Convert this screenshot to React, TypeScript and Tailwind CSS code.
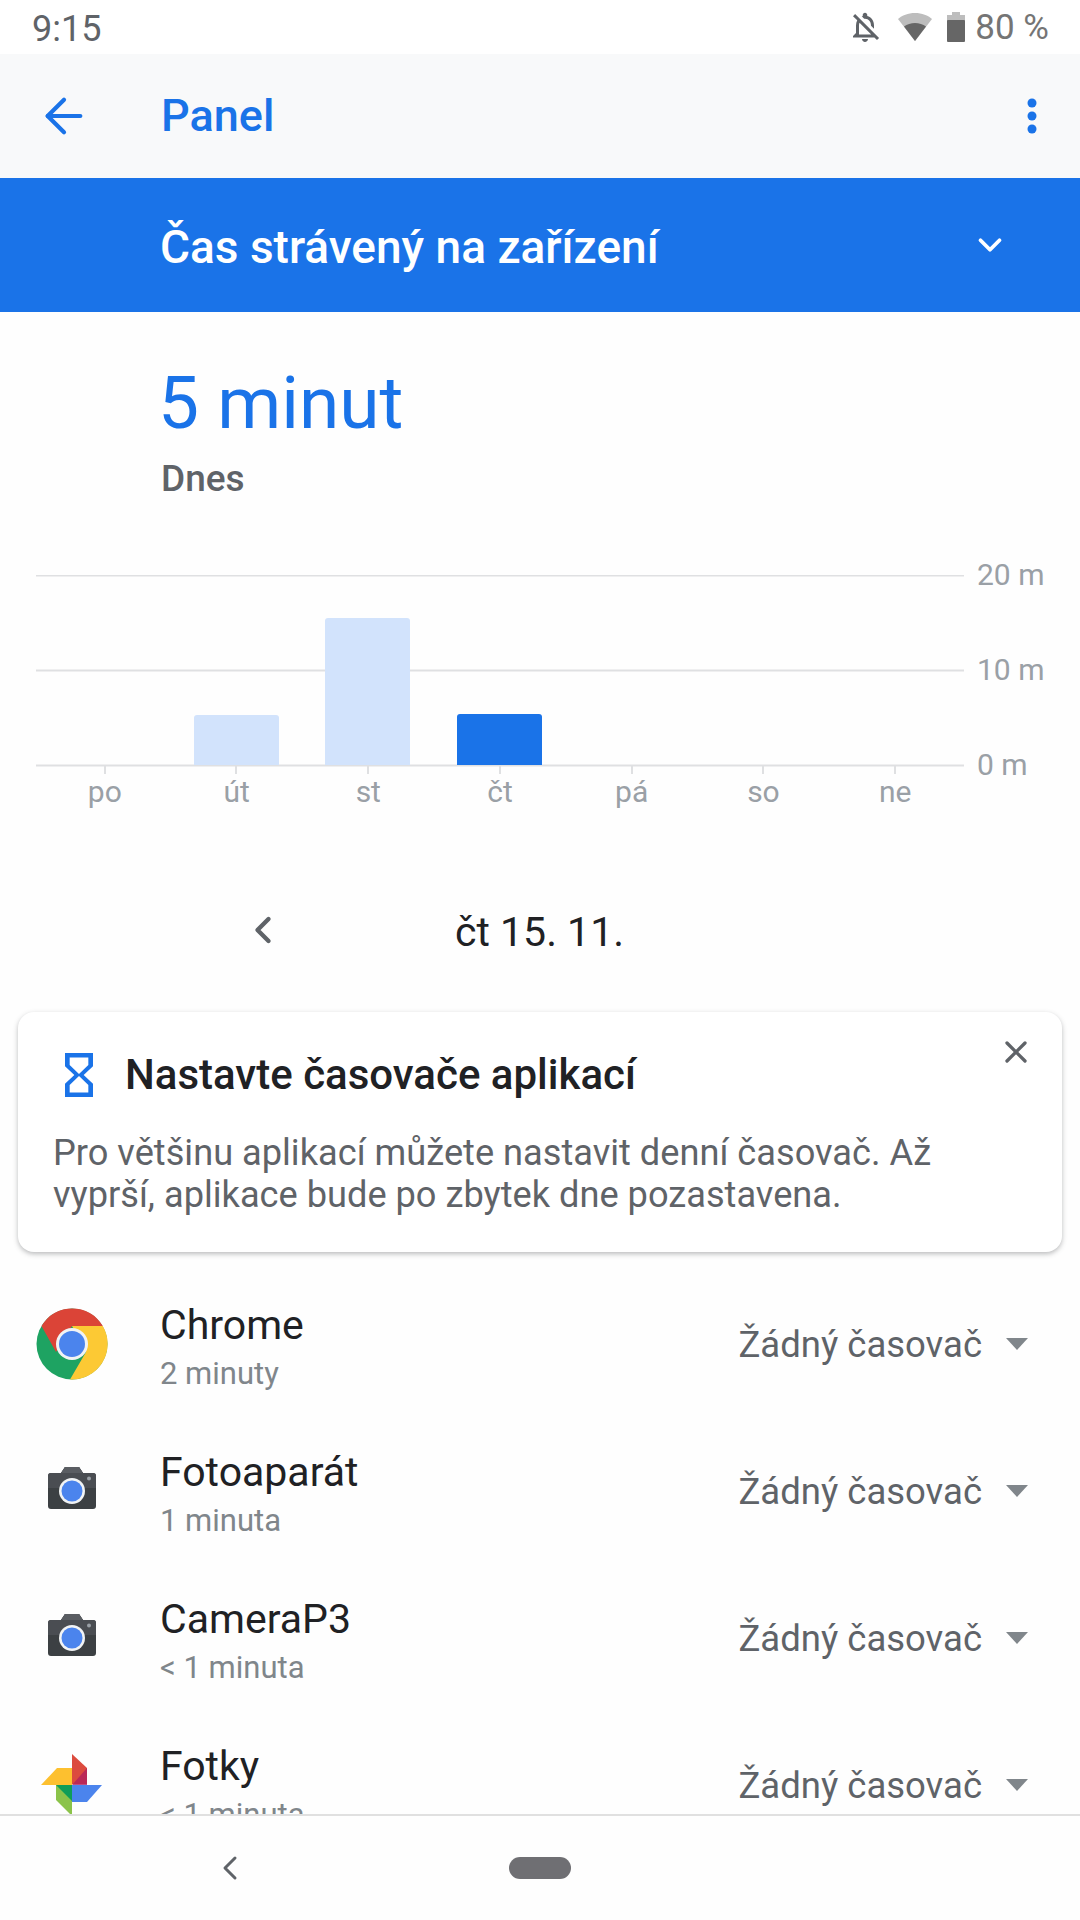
import React from 'react';
import { ArrowLeft, ChevronDown, ChevronLeft, X } from 'lucide-react';

const days = ['po', 'út', 'st', 'čt', 'pá', 'so', 'ne'];

const ChromeIcon = () => (
  <svg width="72" height="72" viewBox="0 0 72 72">
    <circle cx="36" cy="36" r="35.5" fill="#1ea362" />
    <path d="M5.500 18A35.500 35.500 0 0 1 66.800 18H36L20 44z" fill="#db4437" />
    <path d="M66.800 18A35.500 35.500 0 0 1 34 71.400L50 44 36 18z" fill="#fcc934" />
    <circle cx="36" cy="36" r="16" fill="#f1f3f4" />
    <circle cx="36" cy="36" r="13" fill="#4b84ed" />
  </svg>
);

const CameraIcon = () => (
  <svg className="mb-[5px]" width="48" height="42" viewBox="0 0 48 42">
    <path d="M3 6h10l4-6h14l4 6h10a3 3 0 0 1 3 3v30a3 3 0 0 1-3 3H3a3 3 0 0 1-3-3V9a3 3 0 0 1 3-3z" fill="#3c4043" />
    <path d="M13 6l4-6h14l4 6h10a3 3 0 0 1 3 3v12H0V9a3 3 0 0 1 3-3z" fill="#4a4d52" />
    <path d="M13 6l4-6h14l4 6z" fill="#5a5d62" />
    <circle cx="24" cy="24" r="13" fill="#f1f3f4" />
    <circle cx="24" cy="24" r="10.5" fill="#4b84ed" />
    <circle cx="41" cy="11.5" r="2" fill="#9aa0a6" />
  </svg>
);

const PhotosIcon = () => (
  <svg width="62" height="62" viewBox="0 0 62 62">
    <path d="M31 0l15 14v16H31z" fill="#dc4b3e" />
    <path d="M46 14v17H31z" fill="#b1205f" opacity="0.8" />
    <path d="M0 31l16-17h15v17z" fill="#fdc02f" />
    <path d="M31 31h30L46 48H31z" fill="#4b84ed" />
    <path d="M31 31v31L15 46V31z" fill="#8bc34a" />
    <path d="M15 31h16v16z" fill="#0f9d58" />
  </svg>
);

const apps = [
  { name: 'Chrome', time: '2 minuty', icon: <ChromeIcon /> },
  { name: 'Fotoaparát', time: '1 minuta', icon: <CameraIcon /> },
  { name: 'CameraP3', time: '< 1 minuta', icon: <CameraIcon /> },
  { name: 'Fotky', time: '< 1 minuta', icon: <PhotosIcon /> },
];

export default function App() {
  return (
    <div className="flex h-[1920px] w-[1080px] flex-col overflow-hidden bg-[#fefefe] [font-family:Roboto,sans-serif]">
      {/* status bar */}
      <div className="flex h-[54px] shrink-0 items-center justify-between bg-white pl-[32px] pr-[31px] text-[35px] text-[#5f6368]">
        <span className="pt-[3px] text-[36px]">9:15</span>
        <div className="flex items-center">
          <svg width="36" height="36" viewBox="0 0 24 24" fill="#5f6368">
            <path d="M12 22c1.1 0 2-.9 2-2h-4c0 1.1.9 2 2 2zm0-15.5c2.49 0 4 2.02 4 4.5v.1l2 2V11c0-3.07-1.63-5.64-4.5-6.32V4c0-.83-.67-1.5-1.5-1.5s-1.5.67-1.5 1.5v.68c-.24.06-.47.15-.69.23l1.64 1.64c.18-.02.36-.05.55-.05zM5.41 3.35L4 4.76l2.81 2.81C6.29 8.57 6 9.74 6 11v5l-2 2v1h14.24l1.74 1.74 1.41-1.41L5.41 3.35zM16 17H8v-6c0-.68.12-1.32.34-1.9L16 16.76V17z" />
          </svg>
          <svg className="ml-[14px]" width="36" height="28" viewBox="0 0 36 28">
            <path d="M18 0C11 0 5 2.500 1 6l17 22L35 6c-4-3.500-10-6-17-6z" fill="#bdbdbd" />
            <path d="M7 13.500C10 11.500 14 10 18 10s8 1.500 11 3.500L18 28z" fill="#666" />
          </svg>
          <svg className="ml-[14px]" width="18" height="30" viewBox="0 0 18 30">
            <path d="M5 0h8v3h5v7H0V3h5z" fill="#bdbdbd" />
            <rect y="8" width="18" height="22" rx="1" fill="#666" />
          </svg>
          <span className="ml-[10px] pt-[3px] text-[#757575]">80 %</span>
        </div>
      </div>

      {/* app bar */}
      <div className="flex h-[124px] shrink-0 items-center bg-[#f8f9fa] pl-[36px] pr-[43px] text-[#1a73e8]">
        <ArrowLeft size={56} strokeWidth={1.8} />
        <span className="ml-[69px] text-[45px] font-medium">Panel</span>
        <svg className="ml-auto" width="10" height="36" viewBox="0 0 10 36" fill="#1a73e8">
          <circle cx="5" cy="5" r="4.500" />
          <circle cx="5" cy="18" r="4.500" />
          <circle cx="5" cy="31" r="4.500" />
        </svg>
      </div>

      {/* selector */}
      <div className="flex h-[134px] shrink-0 items-center justify-between bg-[#1a73e8] pl-[160px] pr-[71px] text-white">
        <span className="pt-[4px] text-[46px] font-medium">Čas strávený na zařízení</span>
        <ChevronDown size={38} strokeWidth={2.4} />
      </div>

      {/* summary */}
      <div className="pl-[158px] pt-[50px]">
        <div className="text-[73px] leading-[82px] text-[#1a73e8]">5 minut</div>
        <div className="ml-[3px] mt-[15px] text-[37px] font-medium leading-[40px] text-[#5f6368]">Dnes</div>
      </div>

      {/* chart */}
      <div className="mt-[60px] flex pl-[36px]">
        <svg className="mt-[16px]" width="928" height="200" viewBox="0 0 928 200">
          <path d="M0 0.500H928M0 95.500H928M0 190.500H928" stroke="#dfe0e2" strokeWidth="2" fill="none" />
          <path d="M69 190v9M200 190v9M332 190v9M464 190v9M596 190v9M727 190v9M859 190v9" stroke="#dfe0e2" strokeWidth="2" />
          <path d="M158 143a3 3 0 0 1 3-3h79a3 3 0 0 1 3 3v47h-85z" fill="#d2e3fc" />
          <path d="M289 46a3 3 0 0 1 3-3h79a3 3 0 0 1 3 3v144h-85z" fill="#d2e3fc" />
          <path d="M421 142a3 3 0 0 1 3-3h79a3 3 0 0 1 3 3v48h-85z" fill="#1a73e8" />
        </svg>
        <div className="ml-[13px] flex h-[222px] flex-col justify-between text-[30px] leading-[32px] text-[#9aa0a6]">
          <span>20 m</span>
          <span>10 m</span>
          <span>0 m</span>
        </div>
      </div>
      <div className="-mt-[7px] ml-[39px] grid w-[922px] grid-cols-7 text-center text-[30px] leading-[36px] text-[#9aa0a6]">
        {days.map(day => (
          <span key={day}>{day}</span>
        ))}
      </div>

      {/* date */}
      <div className="mt-[98px] flex h-[50px] items-center pl-[241px] text-[#202124]">
        <ChevronLeft size={44} strokeWidth={2.4} className="-translate-y-[3px] text-[#5f6368]" />
        <span className="ml-[170px] text-[41px]">čt 15. 11.</span>
      </div>

      {/* tip card */}
      <div className="relative mx-[18px] mt-[54px] h-[240px] shrink-0 rounded-[16px] bg-white px-[35px] pt-[31px] shadow-[0_2px_5px_rgba(60,64,67,0.35)]">
        <button className="absolute right-[28px] top-[22px] text-[#5f6368]">
          <X size={36} strokeWidth={2.2} />
        </button>
        <div className="flex items-center">
          <svg className="ml-[12px]" width="28" height="44" viewBox="6 2 12 20" preserveAspectRatio="none" fill="#1a73e8">
            <path d="M6 2v6h.01L6 8.010 10 12l-4 4 .01.01H6V22h12v-5.990h-.01L18 16l-4-4 4-3.990-.01-.01H18V2H6zm10 14.500V20H8v-3.500l4-4 4 4zm-4-5l-4-4V4h8v3.500l-4 4z" />
          </svg>
          <span className="ml-[32px] text-[42px] font-medium text-[#202124]">Nastavte časovače aplikací</span>
        </div>
        <p className="mt-[26px] text-[36.2px] leading-[42px] text-[#5f6368]">
          Pro většinu aplikací můžete nastavit denní časovač. Až
          <br />
          vyprší, aplikace bude po zbytek dne pozastavena.
        </p>
      </div>

      {/* app list */}
      <div className="mt-[18px] min-h-0 flex-1 overflow-hidden">
        {apps.map(app => (
          <div key={app.name} className="flex h-[147px] shrink-0 items-center pl-[36px] pr-[52px]">
            <div className="flex w-[72px] justify-center">{app.icon}</div>
            <div className="ml-[52px] pt-[6px]">
              <div className="text-[41px] leading-[48px] text-[#202124]">{app.name}</div>
              <div className="mt-[6px] text-[31px] leading-[38px] text-[#80868b]">{app.time}</div>
            </div>
            <span className="ml-auto pt-[4px] text-[36.5px] text-[#5f6368]">Žádný časovač</span>
            <svg className="ml-[24px]" width="22" height="12" viewBox="0 0 22 12" fill="#80868b">
              <path d="M0 0h22L11 12z" />
            </svg>
          </div>
        ))}
      </div>

      {/* nav bar */}
      <div className="relative flex h-[106px] shrink-0 items-center justify-center border-t-2 border-[#e0e0e0] bg-[#fefefe]">
        <ChevronLeft size={40} strokeWidth={1.8} className="absolute left-[210px] text-[#5f6368]" />
        <div className="h-[22px] w-[62px] rounded-full bg-[#6f6f73]" />
      </div>
    </div>
  );
}
